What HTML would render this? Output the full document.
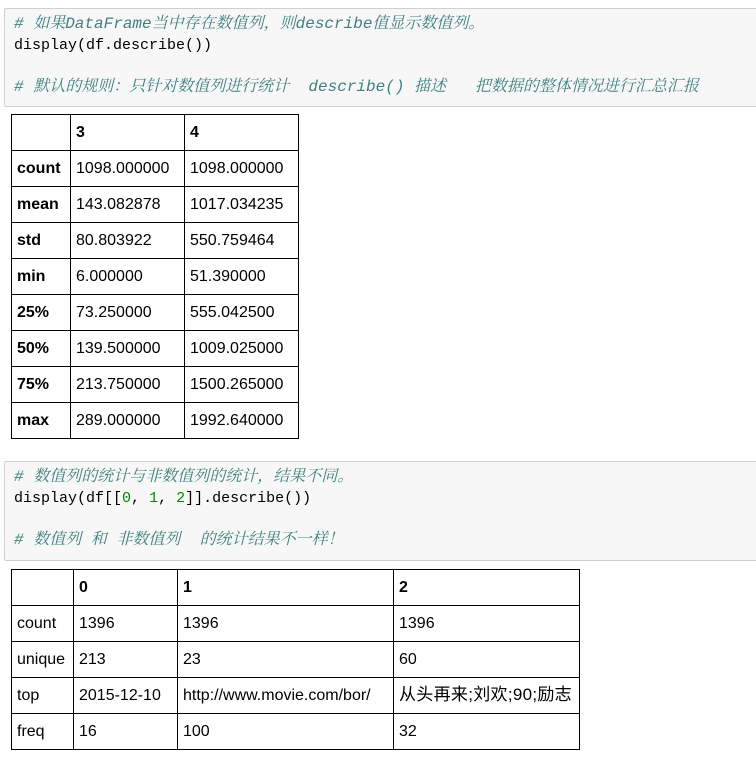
<!DOCTYPE html>
<html><head><meta charset="utf-8"><style>
body{margin:0;background:#fff;width:756px;height:761px;overflow:hidden;position:relative;font-family:"Liberation Sans","Noto Sans CJK SC",sans-serif;}
.code{position:absolute;left:4px;width:780px;background:#f7f7f7;border:1px solid #cfcfcf;border-radius:2px;box-sizing:border-box;font-family:"Liberation Mono","Noto Serif CJK SC",monospace;font-size:15px;line-height:21px;padding:5px 9px;white-space:pre;color:#000}
.c{color:#408080;font-style:italic;font-size:16px}
.n{color:#080}
table{position:absolute;left:11px;border-collapse:collapse;font-size:16px;color:#000}
td,th{border:1px solid #000;height:36px;padding:0 5px;text-align:left;white-space:nowrap;box-sizing:border-box;line-height:18px}
th{font-weight:bold}
.cj{font-size:17px;line-height:18px;letter-spacing:0.3px}
</style></head><body>
<div class="code" style="top:8px;height:99px"><span class="c"># 如果DataFrame当中存在数值列，则describe值显示数值列。</span>
display(df.describe())

<span class="c"># 默认的规则：只针对数值列进行统计  describe() 描述   把数据的整体情况进行汇总汇报</span></div>
<table style="top:114px">
<tr style="height:36px"><th style="width:59px"></th><th style="width:114px">3</th><th style="width:114px">4</th></tr>
<tr style="height:36px"><th>count</th><td>1098.000000</td><td>1098.000000</td></tr>
<tr style="height:36px"><th>mean</th><td>143.082878</td><td>1017.034235</td></tr>
<tr style="height:36px"><th>std</th><td>80.803922</td><td>550.759464</td></tr>
<tr style="height:36px"><th>min</th><td>6.000000</td><td>51.390000</td></tr>
<tr style="height:36px"><th>25%</th><td>73.250000</td><td>555.042500</td></tr>
<tr style="height:36px"><th>50%</th><td>139.500000</td><td>1009.025000</td></tr>
<tr style="height:36px"><th>75%</th><td>213.750000</td><td>1500.265000</td></tr>
<tr style="height:36px"><th>max</th><td>289.000000</td><td>1992.640000</td></tr>
</table>
<div class="code" style="top:461px;height:100px"><span class="c"># 数值列的统计与非数值列的统计，结果不同。</span>
display(df[[<span class="n">0</span>, <span class="n">1</span>, <span class="n">2</span>]].describe())

<span class="c"># 数值列 和 非数值列  的统计结果不一样！</span></div>
<table style="top:569px">
<tr style="height:36px"><th style="width:62px"></th><th style="width:104px">0</th><th style="width:216px">1</th><th style="width:186px">2</th></tr>
<tr style="height:36px"><td>count</td><td>1396</td><td>1396</td><td>1396</td></tr>
<tr style="height:36px"><td>unique</td><td>213</td><td>23</td><td>60</td></tr>
<tr style="height:36px"><td>top</td><td>2015-12-10</td><td>http://www.movie.com/bor/</td><td><span class="cj">从头再来;刘欢;90;励志</span></td></tr>
<tr style="height:36px"><td>freq</td><td>16</td><td>100</td><td>32</td></tr>
</table>
</body></html>
